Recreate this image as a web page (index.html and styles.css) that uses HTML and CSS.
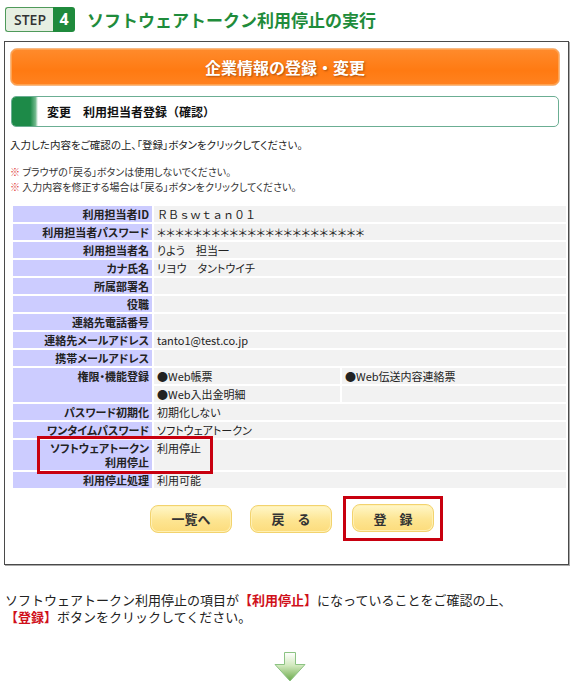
FILE: index.html
```html
<!DOCTYPE html>
<html lang="ja">
<head>
  <meta charset="utf-8">
  <title>STEP 4 ソフトウェアトークン利用停止の実行</title>
  <link rel="stylesheet" href="styles.css">
</head>
<body>
  <div class="step">
    <span class="step-label">STEP</span><span class="step-num">4</span>
    <h1 class="step-title">ソフトウェアトークン利用停止の実行</h1>
  </div>

  <div class="frame">
    <div class="banner">企業情報の登録・変更</div>

    <div class="section">
      <span class="section-mark"></span>
      <span class="section-title">変更　利用担当者登録（確認）</span>
    </div>

    <p class="lead">入力した内容をご確認の上、「登録」ボタンをクリックしてください。</p>
    <ul class="notes">
      <li><span class="kome">※</span> ブラウザの「戻る」ボタンは使用しないでください。</li>
      <li><span class="kome">※</span> 入力内容を修正する場合は「戻る」ボタンをクリックしてください。</li>
    </ul>

    <div class="table-wrap">
      <table class="info">
        <tr><th>利用担当者ID</th><td colspan="2" class="wide">ＲＢｓｗｔａｎ０１</td></tr>
        <tr><th>利用担当者パスワード</th><td colspan="2">＊＊＊＊＊＊＊＊＊＊＊＊＊＊＊＊＊＊＊＊＊＊＊</td></tr>
        <tr><th>利用担当者名</th><td colspan="2">りよう　担当一</td></tr>
        <tr><th>カナ氏名</th><td colspan="2">リヨウ　タントウイチ</td></tr>
        <tr><th>所属部署名</th><td colspan="2"></td></tr>
        <tr><th>役職</th><td colspan="2"></td></tr>
        <tr><th>連絡先電話番号</th><td colspan="2"></td></tr>
        <tr><th>連絡先メールアドレス</th><td colspan="2">tanto1@test.co.jp</td></tr>
        <tr><th>携帯メールアドレス</th><td colspan="2"></td></tr>
        <tr><th rowspan="2">権限・機能登録</th><td class="half">●Web帳票</td><td>●Web伝送内容連絡票</td></tr>
        <tr><td class="half">●Web入出金明細</td><td></td></tr>
        <tr><th>パスワード初期化</th><td colspan="2">初期化しない</td></tr>
        <tr><th>ワンタイムパスワード</th><td colspan="2">ソフトウェアトークン</td></tr>
        <tr><th>ソフトウェアトークン<br>利用停止</th><td colspan="2">利用停止</td></tr>
        <tr><th>利用停止処理</th><td colspan="2">利用可能</td></tr>
      </table>
      <div class="highlight"></div>
    </div>

    <div class="btns">
      <button class="btn">一覧へ</button>
      <button class="btn">戻　る</button>
      <div class="btn-mark"><button class="btn">登　録</button></div>
    </div>
  </div>

  <p class="guide">ソフトウェアトークン利用停止の項目が<em>【利用停止】</em>になっていることをご確認の上、<br><em>【登録】</em>ボタンをクリックしてください。</p>

  <div class="arrow">
    <svg width="32" height="30" viewBox="0 0 32 30">
      <defs>
        <linearGradient id="ag" x1="0" y1="0" x2="0" y2="1">
          <stop offset="0" stop-color="#ffffff"/>
          <stop offset="0.45" stop-color="#d2e9be"/>
          <stop offset="1" stop-color="#6aa94a"/>
        </linearGradient>
      </defs>
      <path d="M10.5 0.5 H21.5 V12.5 H31 L16 29 L1 12.5 H10.5 Z" fill="url(#ag)" stroke="#8cc383" stroke-width="1"/>
    </svg>
  </div>
</body>
</html>
```

FILE: styles.css
```css
body { margin: 0; width: 579px; background: #fff; color: #222; font-family: "Noto Sans CJK JP", "Noto Sans", sans-serif; }

/* step heading */
.step { display: flex; align-items: center; padding: 7px 0 0 5px; height: 25px; }
.step-label { height: 23px; line-height: 23px; padding: 0 7px 0 8px; background: #e6efe2; border: 1px solid #4f9a5a; border-right: none; border-radius: 3px 0 0 3px; font-family: "Open Sans", sans-serif; font-weight: 600; font-size: 14px; color: #333; }
.step-num { height: 25px; line-height: 25px; width: 22px; text-align: center; background: #1f8a3c; border-radius: 0 3px 3px 0; color: #fff; font-family: "Open Sans", sans-serif; font-weight: 700; font-size: 16px; }
.step-title { margin: 0 0 0 12px; font-size: 17px; font-weight: 700; color: #1f8c3b; line-height: 25px; }

/* main frame */
.frame { position: relative; width: 563px; margin: 9px 0 0 4px; padding-bottom: 23px; border: 1px solid #4a4a4a; box-shadow: 1px 1px 0 #aaa; }
.banner { margin: 6px 8px 0 5px; height: 36px; line-height: 36px; text-align: center; color: #fff; font-size: 16px; font-weight: 700; text-shadow: 1px 1px 2px rgba(120, 50, 0, 0.6); background: linear-gradient(#ff8b2c, #ff7a12 60%, #ff8220); border: 1px solid #f6b985; border-radius: 7px; box-shadow: inset 0 0 0 1px #ffa24e; }
.section { display: flex; align-items: center; margin: 10px 9px 0 6px; height: 29px; border: 1px solid #6bae93; border-radius: 5px; overflow: hidden; background: #fff; }
.section-mark { width: 26px; height: 29px; background: linear-gradient(90deg, #1d8a48 70%, #6fb88b 90%, #fff); }
.section-title { margin-left: 9px; font-size: 12px; font-weight: 700; color: #111; }
.lead { margin: 11px 0 0 5px; font-size: 10.5px; line-height: 14px; font-feature-settings: "palt"; color: #222; }
.notes { list-style: none; margin: 12px 0 0 5px; padding: 0; font-size: 10px; line-height: 15px; font-feature-settings: "palt"; color: #333; }
.kome { color: #e0413a; }

/* data table */
.table-wrap { position: relative; margin-top: 10px; }
.info { margin-left: 6px; width: 557px; border-collapse: separate; border-spacing: 2px; font-size: 11px; line-height: 14px; font-feature-settings: "palt"; }
.info th, .info td { padding: 1px 3px; vertical-align: top; text-align: left; }
.info th { width: 133px; text-align: right; background: #ccccff; font-weight: 700; color: #222; }
.info td { background: #f2f2f2; color: #222; font-weight: 400; }
.info td.half { width: 180px; }
.info td.wide { font-feature-settings: normal; }
.highlight { position: absolute; left: 32px; top: 232px; width: 170px; height: 32px; border: 3px solid #c8000f; }

/* buttons */
.btns { display: flex; align-items: center; margin: 6px 0 0 145px; }
.btn { width: 82px; height: 28px; padding: 0; border: 1px solid #f2d36e; border-radius: 8px; background: linear-gradient(#fff7c8, #fde592 55%, #fcdc7c); font-family: inherit; font-size: 13px; font-weight: 700; color: #333; box-shadow: inset 0 0 0 1px #fff0b4; }
.btn + .btn { margin-left: 18px; }
.btn-mark { margin-left: 11px; padding: 5px 6px 6px 6px; border: 3px solid #c8000f; }

/* guide */
.guide { margin: 26px 0 0 5px; font-size: 13px; line-height: 17px; color: #222; }
.guide em { font-style: normal; font-weight: 700; color: #d0101a; }
.arrow { display: flex; justify-content: center; margin-top: 27px; }
.arrow svg { display: block; }
```
